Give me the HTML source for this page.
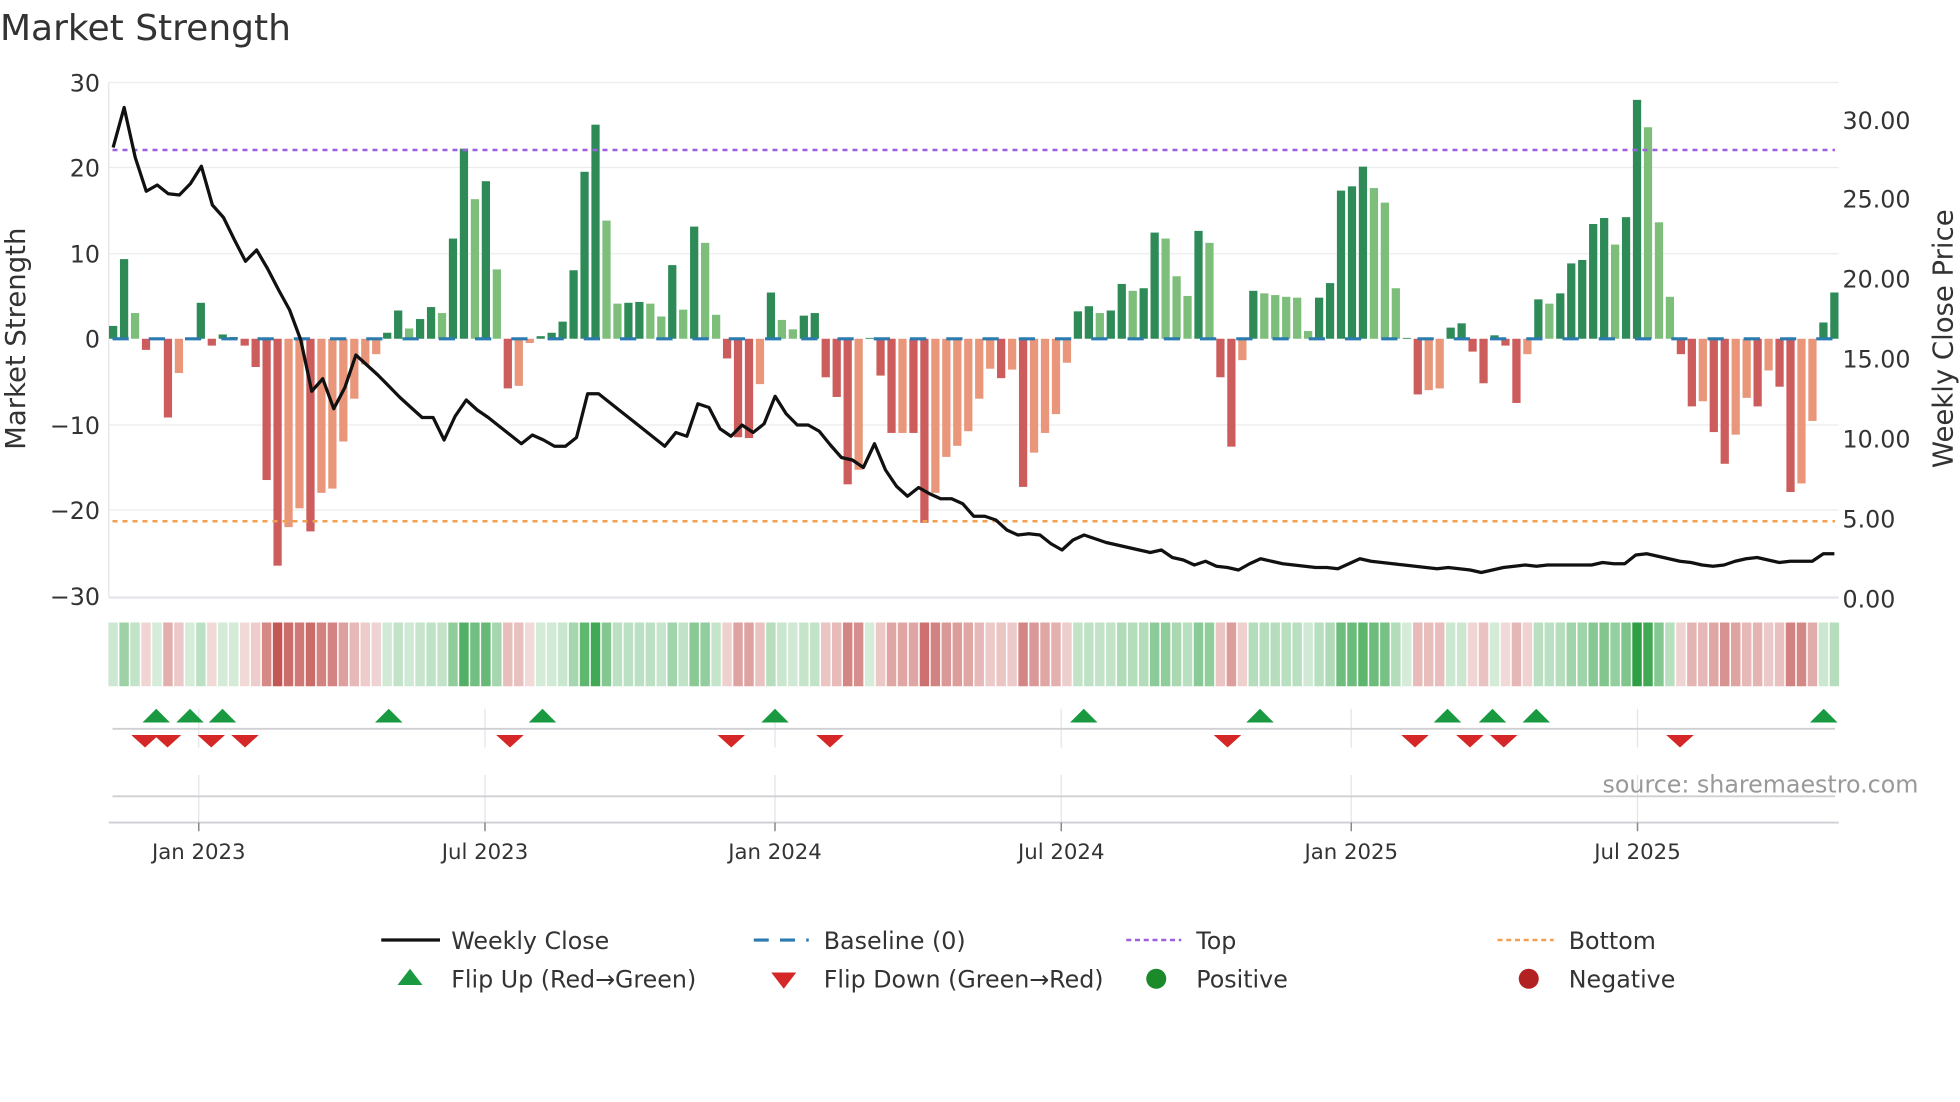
<!DOCTYPE html>
<html><head><meta charset="utf-8"><style>
html,body{margin:0;padding:0;background:#fff;width:1960px;height:1102px;overflow:hidden}
svg{display:block;font-family:"Liberation Sans","DejaVu Sans",sans-serif}
text{fill:#333}
</style></head><body>
<svg id="s" width="1960" height="1102" viewBox="0 0 1568 881.6">
<text x="0" y="32" font-size="28.8" font-family="DejaVu Sans" fill="#333">Market Strength</text>
<g id="grid" stroke="#ececec" stroke-width="1">
<line x1="87" y1="66" x2="1471" y2="66"/><line x1="87" y1="134" x2="1471" y2="134"/><line x1="87" y1="203" x2="1471" y2="203"/><line x1="87" y1="340" x2="1471" y2="340"/><line x1="87" y1="408" x2="1471" y2="408"/>
</g>
<line x1="87" y1="66" x2="87" y2="478" stroke="#e4e4e4"/>
<line x1="87" y1="478" x2="1471" y2="478" stroke="#e6e6ee" stroke-width="2"/>
<g font-size="19" font-family="DejaVu Sans" text-anchor="end">
<text x="80" y="73">30</text><text x="80" y="141">20</text><text x="80" y="210">10</text><text x="80" y="278">0</text><text x="80" y="347">−10</text><text x="80" y="415">−20</text><text x="80" y="484">−30</text>
</g>
<g font-size="19" font-family="DejaVu Sans">
<text x="1474" y="103">30.00</text><text x="1474" y="166">25.00</text><text x="1474" y="230">20.00</text><text x="1474" y="294">15.00</text><text x="1474" y="358">10.00</text><text x="1474" y="422">5.00</text><text x="1474" y="486">0.00</text>
</g>
<text transform="translate(20,271) rotate(-90)" text-anchor="middle" font-size="22" font-family="DejaVu Sans">Market Strength</text>
<text transform="translate(1562,271) rotate(-90)" text-anchor="middle" font-size="22" font-family="DejaVu Sans">Weekly Close Price</text>
<g id="bars"></g>
<line x1="90" y1="271" x2="1468" y2="271" stroke="#2b7bb0" stroke-width="2.5" stroke-dasharray="13 16"/>
<line x1="90" y1="120" x2="1468" y2="120" stroke="#9b5fe0" stroke-width="2" stroke-dasharray="4 4"/>
<line x1="90" y1="417" x2="1468" y2="417" stroke="#f0a050" stroke-width="2" stroke-dasharray="4 4"/>
<polyline id="price" fill="none" stroke="#111" stroke-width="2.6" stroke-linejoin="round"/>
<g id="heat"></g>
<g stroke="#e2e4ea" stroke-width="1">
<line x1="159" y1="567" x2="159" y2="598"/><line x1="388" y1="567" x2="388" y2="598"/><line x1="620" y1="567" x2="620" y2="598"/><line x1="849" y1="567" x2="849" y2="598"/><line x1="1081" y1="567" x2="1081" y2="598"/><line x1="1310" y1="567" x2="1310" y2="598"/>
<line x1="159" y1="620" x2="159" y2="658"/><line x1="388" y1="620" x2="388" y2="658"/><line x1="620" y1="620" x2="620" y2="658"/><line x1="849" y1="620" x2="849" y2="658"/><line x1="1081" y1="620" x2="1081" y2="658"/><line x1="1310" y1="620" x2="1310" y2="658"/>
</g>
<line x1="90" y1="583" x2="1468" y2="583" stroke="#d0d0d4" stroke-width="1.5"/>
<line x1="90" y1="637" x2="1468" y2="637" stroke="#d0d0d4" stroke-width="1.5"/>
<line x1="87" y1="658" x2="1471" y2="658" stroke="#cfcfd4" stroke-width="1.5"/>
<g stroke="#888" stroke-width="1.2">
<line x1="159" y1="658" x2="159" y2="665"/><line x1="388" y1="658" x2="388" y2="665"/><line x1="620" y1="658" x2="620" y2="665"/><line x1="849" y1="658" x2="849" y2="665"/><line x1="1081" y1="658" x2="1081" y2="665"/><line x1="1310" y1="658" x2="1310" y2="665"/>
</g>
<g id="flips"></g>
<text x="1282" y="634" font-size="19" font-family="DejaVu Sans" style="fill:#999">source: sharemaestro.com</text>
<g font-size="17" font-family="DejaVu Sans" text-anchor="middle">
<text x="159" y="687">Jan 2023</text><text x="388" y="687">Jul 2023</text><text x="620" y="687">Jan 2024</text><text x="849" y="687">Jul 2024</text><text x="1081" y="687">Jan 2025</text><text x="1310" y="687">Jul 2025</text>
</g>
<g font-size="19" font-family="DejaVu Sans">
<line x1="305" y1="752" x2="352" y2="752" stroke="#111" stroke-width="2.6"/><text x="361" y="759">Weekly Close</text>
<line x1="603" y1="752" x2="647" y2="752" stroke="#2b7bb0" stroke-width="2.5" stroke-dasharray="12 9"/><text x="659" y="759">Baseline (0)</text>
<line x1="901" y1="752" x2="945" y2="752" stroke="#9b5fe0" stroke-width="2" stroke-dasharray="4 3"/><text x="957" y="759">Top</text>
<line x1="1198" y1="752" x2="1243" y2="752" stroke="#f0a050" stroke-width="2" stroke-dasharray="4 3"/><text x="1255" y="759">Bottom</text>
<polygon points="318,788 338,788 328,775" fill="#1a9a40"/><text x="361" y="790">Flip Up (Red→Green)</text>
<polygon points="617,778 637,778 627,791" fill="#d62728"/><text x="659" y="790">Flip Down (Green→Red)</text>
<circle cx="925" cy="783" r="8" fill="#1a8a2a"/><text x="957" y="790">Positive</text>
<circle cx="1223" cy="783" r="8" fill="#b22222"/><text x="1255" y="790">Negative</text>
</g>
</svg>
<script>
const NS="http://www.w3.org/2000/svg";
const B=[[1.5,1],[9.3,1],[3,0],[-1.3,1],[0.1,1],[-9.2,1],[-4,0],[0.1,1],[4.2,1],[-0.8,1],[0.5,1],[0.2,1],[-0.8,1],[-3.3,1],[-16.5,1],[-26.5,1],[-22,0],[-19.8,0],[-22.5,1],[-18,0],[-17.5,0],[-12,0],[-7,0],[-3,0],[-1.8,0],[0.7,1],[3.3,1],[1.2,0],[2.3,1],[3.7,1],[3,0],[11.7,1],[22.2,1],[16.3,0],[18.4,1],[8.1,0],[-5.8,1],[-5.5,0],[-0.5,0],[0.3,1],[0.7,1],[2,1],[8,1],[19.5,1],[25,1],[13.8,0],[4.1,0],[4.2,1],[4.3,1],[4.1,0],[2.6,0],[8.6,1],[3.4,0],[13.1,1],[11.2,0],[2.8,0],[-2.3,1],[-11.5,1],[-11.6,1],[-5.3,0],[5.4,1],[2.2,0],[1.1,0],[2.7,1],[3,1],[-4.5,1],[-6.8,1],[-17,1],[-15.3,0],[0.1,1],[-4.3,1],[-11,1],[-11,0],[-11,1],[-21.5,1],[-18,0],[-13.8,0],[-12.5,0],[-10.8,0],[-7,0],[-3.5,0],[-4.6,1],[-3.6,0],[-17.3,1],[-13.3,0],[-11,0],[-8.8,0],[-2.8,0],[3.2,1],[3.8,1],[3,0],[3.3,1],[6.4,1],[5.6,0],[5.9,1],[12.4,1],[11.7,0],[7.3,0],[5,0],[12.6,1],[11.2,0],[-4.5,1],[-12.6,1],[-2.5,0],[5.6,1],[5.3,0],[5.1,0],[4.9,0],[4.8,0],[0.9,0],[4.8,1],[6.5,1],[17.3,1],[17.8,1],[20.1,1],[17.6,0],[15.9,0],[5.9,0],[0.1,1],[-6.5,1],[-6,0],[-5.8,0],[1.3,1],[1.8,1],[-1.5,1],[-5.2,1],[0.4,1],[-0.8,1],[-7.5,1],[-1.8,0],[4.6,1],[4.1,0],[5.3,1],[8.8,1],[9.2,1],[13.4,1],[14.1,1],[11,0],[14.2,1],[27.9,1],[24.7,0],[13.6,0],[4.9,0],[-1.8,1],[-7.9,1],[-7.3,0],[-10.9,1],[-14.6,1],[-11.2,0],[-6.9,0],[-7.9,1],[-3.7,0],[-5.6,1],[-17.9,1],[-16.9,0],[-9.6,0],[1.9,1],[5.4,1]];
const n=B.length, x0=90.5, x1=1467.5, dx=(x1-x0)/(n-1);
const bars=document.getElementById('bars'), heat=document.getElementById('heat');
B.forEach((b,i)=>{const v=b[0],x=x0+i*dx;
 const r=document.createElementNS(NS,'rect');
 const h=Math.abs(v)*6.85, y=v>=0?271-h:271;
 r.setAttribute('x',x-3.3);r.setAttribute('width',6.6);r.setAttribute('y',y);r.setAttribute('height',Math.max(h,0.5));
 r.setAttribute('fill',v>=0?(b[1]?'#2e8b57':'#7dbf7a'):(b[1]?'#cd5c5c':'#e9967a'));bars.appendChild(r);
 const c=document.createElementNS(NS,'rect');
 c.setAttribute('x',x-dx/2+0.6);c.setAttribute('width',dx-1.2);c.setAttribute('y',498);c.setAttribute('height',51);
 const a=Math.min(1,0.2+Math.abs(v)/28*0.8);
 c.setAttribute('fill',v>=0?'#2ea043':'#c0504d');c.setAttribute('fill-opacity',a.toFixed(2));heat.appendChild(c);
});
const P=[118,86,126,153,148,155,156,147,133,164,174,192,209,200,215,232,248,272,313,303,327,310,284,292,300,309,318,326,334,334,352,333,320,328,334,341,348,355,348,352,357,357,350,315,315,322,329,336,343,350,357,346,349,323,326,343,349,340,346,339,317,331,340,340,345,356,366,368,374,355,376,389,397,390,395,399,399,403,413,413,416,424,428,427,428,435,440,432,428,431,434,436,438,440,442,440,446,448,452,449,453,454,456,451,447,449,451,452,453,454,454,455,451,447,449,450,451,452,453,454,455,454,455,456,458,456,454,453,452,453,452,452,452,452,452,450,451,451,444,443,445,447,449,450,452,453,452,449,447,446,448,450,449,449,449,443,443];
const pd=(x1-x0)/(P.length-1);
document.getElementById('price').setAttribute('points',P.map((y,i)=>(x0+i*pd).toFixed(1)+','+y).join(' '));
const fl=document.getElementById('flips');
[125,152,178,311,434,620,867,1008,1158,1194,1229,1459].forEach(x=>{const p=document.createElementNS(NS,'polygon');p.setAttribute('points',`${x-11},578 ${x+11},578 ${x},567`);p.setAttribute('fill','#1a9a40');fl.appendChild(p);});
[116,134,169,196,408,585,664,982,1132,1176,1203,1344].forEach(x=>{const p=document.createElementNS(NS,'polygon');p.setAttribute('points',`${x-11},588 ${x+11},588 ${x},598`);p.setAttribute('fill','#d62728');fl.appendChild(p);});
</script>
</body></html>
